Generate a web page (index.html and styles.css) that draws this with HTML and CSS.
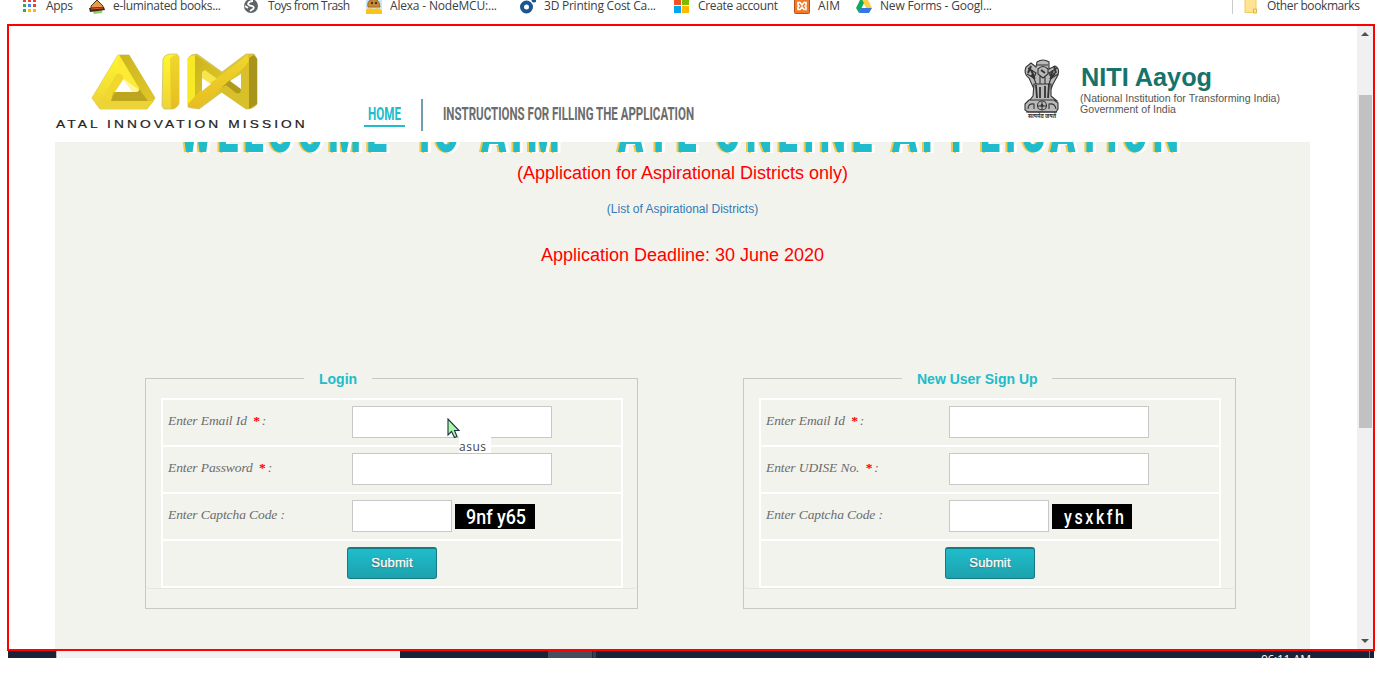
FILE: index.html
```
<!DOCTYPE html>
<html lang="en">
<head>
<meta charset="utf-8">
<title>AIM - ATL Online Application</title>
<link rel="stylesheet" href="styles.css">
</head>
<body>
<nav class="bookmarks">
  <a class="bm"><svg width="16" height="16"><g fill="#ea4335"><path d="M2 -1h3v3h-3zM7 -1h3v3h-3zM12 -1h3v3h-3z"/></g><path fill="#34a853" d="M2 4h3v3h-3z M2 9h3v3h-3z"/><path fill="#4285f4" d="M7 4h3v3h-3z"/><path fill="#ea4335" d="M12 4h3v3h-3z"/><path fill="#fbbc05" d="M7 9h3v3h-3zM12 9h3v3h-3z"/></svg><svg class="label" width="30" height="20"><text x="1" y="10" textLength="27">Apps</text></svg></a>
  <a class="bm"><svg width="16" height="16"><path d="M3 9L14 6L13 13L5 14z" fill="#8bd06a"/><path d="M2 6L8 0L14 6V8H2z" fill="#e69a45" stroke="#51361e"/><path d="M0 8L15 7L16 10L1 12z" fill="#4a2918"/><path d="M2 9L14 8" stroke="#e45137"/></svg><svg class="label" width="110" height="20"><text y="10" textLength="108">e-luminated books...</text></svg></a>
  <a class="bm"><svg width="16" height="16"><circle cx="7" cy="6" r="7" fill="#5f6368"/><path d="M9 1Q5 1 4 4Q5 6 8 6Q11 7 9 9L6 11M1 6L4 8" fill="none" stroke="#fff" stroke-width="1.800"/></svg><svg class="label" width="84" height="20"><text y="10" textLength="82">Toys from Trash</text></svg></a>
  <a class="bm"><svg width="16" height="16"><path fill="#c9e6f3" d="M0 0h16v14H0z"/><path d="M2 7Q1 1 5 0Q13 -3 14 7z" fill="#c98a35" stroke="#a06520"/><circle cx="6" cy="3" r="1.2" fill="#4e3515"/><circle cx="10" cy="3" r="1.2" fill="#4e3515"/><path d="M0 14V10Q2 7 8 9Q14 7 16 11V14z" fill="#fcc419"/></svg><svg class="label" width="110" height="20"><text y="10" textLength="107">Alexa - NodeMCU:...</text></svg></a>
  <a class="bm"><svg width="16" height="16"><circle cx="6.500" cy="7" r="4.500" fill="#fff" stroke="#1b5593" stroke-width="4"/><circle cx="14" cy="0" r="2.500" fill="#1b5593"/></svg><svg class="label" width="114" height="20"><text y="10" textLength="112">3D Printing Cost Ca...</text></svg></a>
  <a class="bm"><svg width="16" height="16"><path fill="#f25022" d="M0-2h7v7H0z"/><path fill="#7fba00" d="M8-2h7v7H8z"/><path fill="#00a4ef" d="M0 6h7v7H0z"/><path fill="#ffb900" d="M8 6h7v7H8z"/></svg><svg class="label" width="82" height="20"><text y="10" textLength="80">Create account</text></svg></a>
  <a class="bm"><svg width="16" height="16"><rect x=".5" y="-1.500" width="15" height="15" rx="1" fill="#f0792b" stroke="#b65219"/><path d="M4 2.500H6L8 5L10 2.500H12V5L11 6L12 7V9.500H10L8 7L6 9.500H4V7L5 6L4 5z" stroke="#fff" stroke-width="1.600" fill="none"/></svg><svg class="label" width="25" height="20"><text y="10" textLength="22">AIM</text></svg></a>
  <a class="bm"><svg width="16" height="16"><path d="M5-2h6l5 10h-6z" fill="#ffcf48"/><path d="M5-2l3 5-5 10-3-5z" fill="#11a861"/><path d="M5 8h11l-3 5H3z" fill="#3777e3"/></svg><svg class="label" width="114" height="20"><text y="10" textLength="112">New Forms - Googl...</text></svg></a>
  <a class="bm other"><svg width="16" height="16"><path d="M1-2h11v14.500H1z" fill="#ffe391" stroke="#f0cd63"/><path d="M9.500 9h3v4h-3z" fill="#ffe391" stroke="#dfb63e"/></svg><svg class="label" width="95" height="20"><text y="10" textLength="93">Other bookmarks</text></svg></a>
</nav>

<div class="window">
  <div class="page">
    <header class="header">
      <svg class="aim" width="252" height="82" viewBox="55 50 252 82">
        <defs>
          <linearGradient id="bright" x1="0" y1="0" x2="0" y2="1"><stop offset="0" stop-color="#fff72d"/><stop offset="1" stop-color="#eed337"/></linearGradient>
          <linearGradient id="deep" x1="0" y1="0" x2="1" y2="1"><stop offset="0" stop-color="#cbb31c"/><stop offset="1" stop-color="#dfc72b"/></linearGradient>
          <linearGradient id="gold" x1="0" y1="0" x2="0" y2="1"><stop offset="0" stop-color="#efd72d"/><stop offset="1" stop-color="#e7bd21"/></linearGradient>
        </defs>
        <g stroke-linejoin="round">
          <path d="M118 55H129L155 98L147 109H100L92 98z" fill="#e7cd27" stroke="#c9bd70" stroke-width=".8"/>
          <path d="M118 55L92 98L97 105L104 97L116 75Q119 71 123 76L127 82L129 55z" fill="url(#bright)"/>
          <path d="M104 97L116 75Q119 71 123 76L126 80L111 101L100 109L97 105z" fill="#f2d72c"/>
          <path d="M119 55H129L155 98L153 101H111L113 92H136Q141 92 139 88z" fill="url(#deep)"/>
          <path d="M123 76L139 88Q141 92 136 92H131L124 79z" fill="#fff176"/>
          <path d="M119 55L139 88Q141 92 136 92H131L124 79L123 76Q119 71 116 75z" fill="#fdea35"/>
          <path d="M124 79L139 90Q138 92 136 92H131z" fill="#fff59c"/>
          <path d="M111 101L113 96L116 92H136Q140 92 139 88L142 93L148 101z" fill="#bda51d"/>
          <path d="M111 101H154L147 109H100L97 105L104 99z" fill="#ebd338"/>
          <path d="M123.500 79L132 92H115z" fill="#fff"/>
        </g>
        <path d="M163 59Q165 54 171 54H177L179 57V103Q177 109 171 109H164L162 106z" fill="url(#bright)" stroke="#c9bd70" stroke-width=".8"/>
        <path d="M170 59Q172 55 177 55L179 57V103Q177 109 171 109z" fill="url(#gold)"/>
        <g stroke-linejoin="round">
          <path d="M188 58Q191 54 197 54L222 72L246 54H254L257 59V104Q254 109 246 109L222 92L199 109L188 107z" fill="#ddc52a" stroke="#c9bd70" stroke-width=".8"/>
          <path d="M195 55L222 73L214 80L202 71V91L195 98z" fill="url(#deep)"/>
          <path d="M202 72L205 70L220 81L213 87L202 78z" fill="#f7e54b"/>
          <path d="M219 86L230 80L241 89V93L234 94z" fill="#b09a1a"/>
          <path d="M218 90L226 85L236 93Q241 96 241 88V70L249 60V109H246z" fill="#d9c02b"/>
          <path d="M188 57L195 55V98L188 104z" fill="#f8e927"/>
          <path d="M188 104L199 92L241 60L247 54L249 60Q247 65 241 70L202 105Q198 109 190 108z" fill="url(#gold)"/>
          <path d="M202 78L211 84L202 91zM230 81L241 74V89z" fill="#fff"/>
          <path d="M249 58L254 55L257 59V104L249 109z" fill="#a8941a"/>
        </g>
        <text class="mission" transform="translate(56 128) scale(1.250 1)" textLength="199">ATAL INNOVATION MISSION</text>
      </svg>
      <nav class="menu">
        <a class="home"><svg width="33" height="24"><text y="21" textLength="33" lengthAdjust="spacingAndGlyphs">HOME</text></svg></a>
        <a class="instructions"><svg width="252" height="24"><text y="21" textLength="251" lengthAdjust="spacingAndGlyphs">INSTRUCTIONS FOR FILLING THE APPLICATION</text></svg></a>
      </nav>
      <svg class="niti" width="262" height="66" viewBox="1022 56 262 66">
        <g fill="#b9b9b9" stroke="#333" stroke-width="1.100">
          <path d="M1037 62Q1043 58 1049 62V69L1055 66Q1060 68 1058 75L1053 84L1051 89H1034L1029 78Q1023 74 1026 67L1031 63L1036 67z"/>
          <path d="M1037 65H1048M1038 69Q1043 64 1048 69V74L1043 78L1038 74zM1028 68L1036 73L1034 78L1027 74M1057 68L1049 73L1052 78L1058 74M1033 75L1036 84M1052 75L1049 84M1040 76V86M1045 76V86" fill="none"/>
          <path d="M1034 84L1033 96L1029 101H1057L1051 96L1051 84z"/>
          <path d="M1036 85L1037 98M1040 87V98M1045 86V98M1049 84L1048 98" fill="none" stroke-width="1.800"/>
          <path d="M1029 100L1025 104V110L1028 112H1056L1058 109V103L1054 100z"/>
          <circle cx="1042" cy="105.500" r="4.500"/><circle cx="1042" cy="105.500" r="1"/>
          <path d="M1038 106H1046M1042 102V110M1028 109Q1028 103 1034 104V109M1049 109V104Q1055 103 1056 109M1026 112H1057" fill="none"/>
          <path d="M1031 66L1028 73M1054 66L1056 73M1035 79L1031 75M1050 79L1055 73M1031 70L1034 76M1053 71L1050 76M1041 70L1045 73" fill="none" stroke-width="2"/>
        </g>
        <text class="motto" x="1028" y="117.500" textLength="28" lengthAdjust="spacingAndGlyphs">सत्यमेव जयते</text>
        <text class="brand" x="1081" y="86" textLength="131" lengthAdjust="spacingAndGlyphs">NITI Aayog</text>
        <text class="sub" x="1080" y="102" textLength="200" lengthAdjust="spacingAndGlyphs">(National Institution for Transforming India)</text>
        <text class="sub" x="1080" y="113" textLength="96" lengthAdjust="spacingAndGlyphs">Government of India</text>
      </svg>
    </header>
    <main class="content">
      <svg class="welcome" width="1255" height="14">
        <g>
          <text transform="translate(125 9.500) scale(.6 1)" textLength="345">WELCOME</text>
          <text transform="translate(358 9.500) scale(.6 1)" textLength="77">TO</text>
          <text transform="translate(426 9.500) scale(.6 1)" textLength="131">AIM</text>
          <text transform="translate(529 9.500) scale(.6 1)">-</text>
          <text transform="translate(563 9.500) scale(.6 1)" textLength="131">ATL</text>
          <text transform="translate(660 9.500) scale(.6 1)" textLength="262">ONLINE</text>
          <text transform="translate(837 9.500) scale(.6 1)" textLength="478">APPLICATION</text>
        </g>
      </svg>
      <p class="notice">(Application for Aspirational Districts only)</p>
      <a class="list">(List of Aspirational Districts)</a>
      <p class="notice deadline">Application Deadline: 30 June 2020</p>
      <div class="forms">
        <fieldset class="box">
          <legend class="legend login">Login</legend>
          <div class="panel"><div class="rows">
            <div class="row"><label class="name">Enter Email Id <b>*</b>:</label><input class="field"></div>
            <div class="row"><label class="name">Enter Password <b>*</b>:</label><input class="field" type="password"></div>
            <div class="row"><label class="name">Enter Captcha Code :</label><input class="field short"><svg class="captcha" width="80" height="25"><text x="11" y="20" textLength="60" lengthAdjust="spacingAndGlyphs">9nf y65</text></svg></div>
            <div class="row"><button class="submit">Submit</button></div>
          </div></div>
        </fieldset>
        <fieldset class="box signup">
          <legend class="legend new">New User Sign Up</legend>
          <div class="panel"><div class="rows">
            <div class="row"><label class="name">Enter Email Id <b>*</b>:</label><input class="field"></div>
            <div class="row"><label class="name">Enter UDISE No. <b>*</b>:</label><input class="field"></div>
            <div class="row"><label class="name">Enter Captcha Code :</label><input class="field short"><svg class="captcha" width="80" height="25"><text transform="translate(12 20) scale(.8 1)" textLength="75">ysxkfh</text></svg></div>
            <div class="row"><button class="submit">Submit</button></div>
          </div></div>
        </fieldset>
      </div>
    </main>
  </div>
  <div class="scrollbar">
    <svg width="16" height="16"><path d="M4 10L8 6L12 10z" fill="#505050"/></svg>
    <div class="thumb"></div>
    <svg class="down" width="16" height="16"><path d="M4 6H12L8 10z" fill="#505050"/></svg>
  </div>
</div>
<footer class="taskbar"><div class="search"></div><div class="task"></div><div class="task2"></div><time class="clock">06:11 AM</time><div class="peek"></div></footer>
<div class="tip">asus</div>
<svg class="cursor" width="14" height="22"><path d="M1 1V17L4.500 13.500L7.500 19.500L10 18.500L7.500 12.500H12z" fill="#a6fca6" stroke="#203040" stroke-width="1.100"/></svg>
</body>
</html>
```
FILE: styles.css
```
* { box-sizing: border-box; }
body { margin: 0; width: 1382px; height: 675px; overflow: hidden; background: #fff; font-family: "Liberation Sans", Arial, sans-serif; }
svg { display: block; flex: none; }
.bookmarks { height: 24px; padding-left: 21px; display: grid; grid-template-columns: 68px 155px 122px 154px 154px 120px 62px 376px 150px; overflow: hidden; }
.bm { display: flex; gap: 8px; font: 12px "Open Sans", "Noto Sans", sans-serif; }
.label { fill: #3c4043; }
.bm.other { border-left: 1px solid #ccc; height: 14px; padding-left: 11px; gap: 7px; }
.bm.other svg { overflow: visible; }
.window { width: 1368px; height: 627px; margin-left: 7px; border: 2px solid #f00; display: flex; overflow: hidden; background: #fff; }
.page { width: 1348px; padding-left: 1px; }
.header { height: 116px; display: flex; align-items: flex-start; }
.aim { margin: 24px 0 0 45px; }
.mission { font: 11px "Liberation Sans", Arial, sans-serif; fill: #222; stroke: #222; stroke-width: .2px; }
.menu { display: flex; margin: 73px 0 0 57px; height: 32px; }
.menu text { font: bold 18px "Roboto", sans-serif; fill: #6c6c6c; }
.home { width: 41px; height: 28px; padding-left: 4px; border-bottom: 2px solid #20bccb; }
.menu .home text { fill: #20bccb; }
.instructions { margin-left: 16px; padding-left: 20px; border-left: 2px solid #739eb2; width: 599px; }
.niti { margin: 30px 0 0 2px; }
.brand { font: bold 25px "Liberation Sans", Arial, sans-serif; fill: #15736b; }
.sub { font: 10.5px "Liberation Sans", Arial, sans-serif; fill: #555; }
.motto { font: bold 6px "Noto Sans", sans-serif; fill: #333; }
.content { margin-left: 45px; width: 1255px; height: 507px; background: #f2f3ec; text-align: center; overflow: hidden; }
.welcome text { font: 900 62px "Roboto", sans-serif; fill: #20bccb; }
.welcome g { filter: drop-shadow(3px 1px 0 #fff) drop-shadow(-2px 0 0 #f5c945); }
.notice { margin: 0; padding-top: 6px; height: 42px; font-size: 18px; line-height: 22px; color: #f00; }
.list { display: block; padding-top: 3px; height: 46px; font-size: 12px; line-height: 16px; color: #337ab7; }
.deadline { padding-top: 0; height: 125px; }
.forms { display: flex; padding-left: 90px; gap: 105px; text-align: left; }
.box { margin: 0; padding: 0; width: 493px; height: 240px; min-width: 0; border: 1px solid #c8c9c5; }
.legend { margin: 0 0 0 158px; padding: 0; height: 19px; font: bold 14px/20px "Liberation Sans", Arial, sans-serif; color: #20bccb; }
.login { width: 68px; padding-left: 15px; }
.new { width: 150px; padding-left: 15px; }
.panel { height: 201px; padding: 10px 14px 0 15px; border-bottom: 1px solid #e5e6df; border-radius: 0 0 4px 4px; }
.rows { display: grid; grid-template-rows: repeat(4, 45px); gap: 2px; padding: 2px; background: #fff; width: 462px; }
.row { background: #f2f3ec; display: flex; align-items: flex-start; padding-top: 6px; }
.name { width: 189px; padding: 7px 0 0 5px; font: italic 13.5px/16px "Liberation Serif", serif; letter-spacing: -.1px; color: #6c6c6c; white-space: nowrap; }
.name b { font-style: normal; color: #f00; margin: 0 2px 0 3px; }
.signup .name { width: 188px; }
.field { width: 200px; height: 32px; margin: 0; padding: 0 8px; border: 1px solid #c8c8c8; background: #fff; }
.short { width: 100px; }
.captcha { margin: 4px 0 0 3px; background: #000; }
.captcha text { font: 500 20px "Roboto", sans-serif; fill: #fff; }
.submit { width: 90px; height: 32px; margin-left: 184px; padding: 0 0 3px; border: 1px solid #147b84; border-top-width: 2px; border-radius: 3px; background: linear-gradient(#20bccb, #1ca2ae); color: #fff; font: 13px "Liberation Sans", Arial, sans-serif; letter-spacing: .15px; -webkit-text-stroke: .25px #fff; text-shadow: 0 1px 1px #555; }
.scrollbar { width: 16px; height: 623px; background: #f0f0f0; display: flex; flex-direction: column; }
.thumb { width: 13px; height: 333px; margin: 53px 0 0 2px; background: #c1c1c1; }
.down { margin-top: auto; }
.taskbar { margin-left: 8px; width: 1366px; height: 7px; background: #192238; display: flex; overflow: hidden; }
.search { margin-left: 48px; width: 344px; border-left: 1px solid #bbb; background: #f2f2f2; }
.task { margin-left: 148px; width: 44px; background: #474d5d; }
.task2 { width: 4px; background: #373e50; border-left: 1px solid #20283b; }
.clock { margin-left: 665px; width: 108px; padding-top: 3px; font: 12px/12px "Open Sans", sans-serif; letter-spacing: -.3px; color: #fff; white-space: nowrap; }
.peek { width: 1px; background: #737988; }
.tip { position: absolute; left: 459px; top: 437px; width: 32px; height: 16px; background: #fff; color: #444; font: 12px/20px "Open Sans", sans-serif; letter-spacing: .5px; overflow: hidden; }
.cursor { position: absolute; left: 447px; top: 418px; }
```
